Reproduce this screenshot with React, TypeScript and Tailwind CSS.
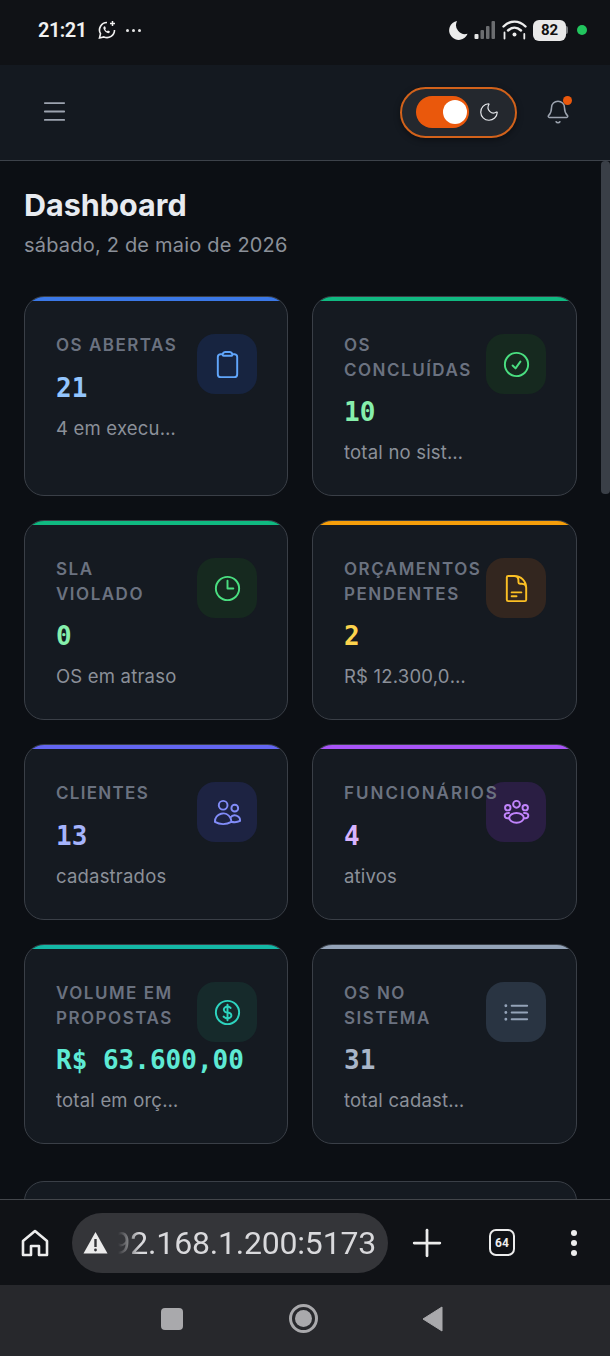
import React from "react";
import {
  HiOutlineClipboard,
  HiOutlineCheckCircle,
  HiOutlineClock,
  HiOutlineDocumentText,
  HiOutlineUsers,
  HiOutlineCurrencyDollar,
  HiOutlineListBullet,
} from "react-icons/hi2";
import { Moon, Bell, Plus, Menu } from "lucide-react";

function GroupIcon({ size }: { size: number }) {
  return (
    <svg width={size} height={size} viewBox="0 0 32 32" fill="none" stroke="currentColor" strokeWidth="2">
      <circle cx="16" cy="7.500" r="3.500" />
      <circle cx="7" cy="11" r="2.800" />
      <circle cx="25" cy="11" r="2.800" />
      <ellipse cx="16" cy="21.500" rx="7.500" ry="5" />
      <path d="M8.500 22H6.500a2.700 2.700 0 0 1-1.200-5.100C6 16.500 7 16.300 9 16.500" />
      <path d="M23.500 22h2a2.700 2.700 0 0 0 1.200-5.100c-.7-.4-1.700-.6-3.700-.4" />
    </svg>
  );
}

const cards = [
  { label: "OS ABERTAS", value: "21", sub: "4 em execução", bar: "bg-[#3b78e7]", val: "text-[#93c5fd]", box: "bg-[#172440]", ic: "text-[#60a5fa]", Icon: HiOutlineClipboard, h: "h-[200px]", lt: "tracking-[1.5px]" },
  { label: "OS CONCLUÍDAS", value: "10", sub: "total no sistema", bar: "bg-[#10b981]", val: "text-[#86efac]", box: "bg-[#16291f]", ic: "text-[#4ade80]", Icon: HiOutlineCheckCircle, h: "h-[200px]", lt: "tracking-[1.5px]" },
  { label: "SLA VIOLADO", value: "0", sub: "OS em atraso", bar: "bg-[#10b981]", val: "text-[#86efac]", box: "bg-[#16291f]", ic: "text-[#4ade80]", Icon: HiOutlineClock, h: "h-[200px]", lt: "tracking-[1.5px]" },
  { label: "ORÇAMENTOS PENDENTES", value: "2", sub: "R$ 12.300,00 total", bar: "bg-[#f59e0b]", val: "text-[#fcd34d]", box: "bg-[#33261f]", ic: "text-[#fbbf24]", Icon: HiOutlineDocumentText, h: "h-[200px]", lt: "tracking-[1.5px]" },
  { label: "CLIENTES", value: "13", sub: "cadastrados", bar: "bg-[#6366f1]", val: "text-[#a5b4fc]", box: "bg-[#1d2342]", ic: "text-[#818cf8]", Icon: HiOutlineUsers, h: "h-[176px]", lt: "tracking-[1.3px]" },
  { label: "FUNCIONÁRIOS", value: "4", sub: "ativos", bar: "bg-[#a855f7]", val: "text-[#d8b4fe]", box: "bg-[#2a1e43]", ic: "text-[#c084fc]", Icon: GroupIcon, h: "h-[176px]", lt: "tracking-[2px]" },
  { label: "VOLUME EM PROPOSTAS", value: "R$ 63.600,00", sub: "total em orçamentos", bar: "bg-[#14b8a6]", val: "text-[#5eead4]", box: "bg-[#162a2b]", ic: "text-[#2dd4bf]", Icon: HiOutlineCurrencyDollar, h: "h-[200px]", lt: "tracking-[1.5px]" },
  { label: "OS NO SISTEMA", value: "31", sub: "total cadastradas", bar: "bg-[#94a3b8]", val: "text-[#a8b5c8]", box: "bg-[#293442]", ic: "text-[#94a3b8]", Icon: HiOutlineListBullet, h: "h-[200px]", lt: "tracking-[1.5px]" },
];

function Card({ c }: { c: (typeof cards)[number] }) {
  const Icon = c.Icon;
  return (
    <div className={`${c.h} rounded-[20px] border border-[#3a3f47] bg-[#151a21] overflow-hidden`}>
      <div className={`h-[5px] -mt-px ${c.bar}`} />
      <div className="flex pl-[31px] pr-[30px] pt-[33px]">
        <div className="relative z-10 flex-1 min-w-0 mr-4">
          <div className={`text-[17px] leading-[24.5px] -mt-[1px] font-semibold text-[#6b7280] ${c.lt}`}>{c.label}</div>
          <div className={`mt-[12px] text-[26px] leading-[36px] font-bold whitespace-nowrap font-['DejaVu_Sans_Mono',monospace] ${c.val}`}>{c.value}</div>
          <div className="mt-[10px] text-[18.5px] leading-[24px] tracking-[0.2px] text-[#8b9099] truncate">{c.sub}</div>
        </div>
        <div className={`w-[60px] h-[60px] rounded-[18px] flex items-center justify-center shrink-0 ${c.box} ${c.ic}`}>
          <Icon size={31} />
        </div>
      </div>
    </div>
  );
}

function StatusBar() {
  return (
    <div className="h-[65px] shrink-0 bg-[#101216] flex items-start justify-between pl-[38px] pr-[23px] pt-[17px] text-[#f1f1f1]">
      <div className="flex items-center gap-[10px] h-[26px]">
        <span className="text-[20px] font-semibold tracking-[-0.5px] font-['Roboto',sans-serif]">21:21</span>
        <svg width="20" height="20" viewBox="0 0 20 20" fill="none" stroke="currentColor" strokeWidth="1.6">
          <path d="M10 2.5a7.5 7.5 0 0 0-6.5 11.2L2.5 18l4.4-1.1A7.5 7.5 0 0 0 17.5 10" />
          <path d="M7 6.5c-1 .8-.8 2.6.8 4.4s3.500 2.800 4.600 1.900l.6-1.300-2-1-.9.700c-.8-.3-1.600-1.200-1.900-2l.7-.9-.900-2z" fill="currentColor" stroke="none" />
          <path d="M15.500 1v5M13 3.500h5" strokeWidth="1.500" />
        </svg>
        <span className="flex gap-[3px] -ml-[1px]">
          <i className="w-[3px] h-[3px] rounded-full bg-[#e5e5e5]" />
          <i className="w-[3px] h-[3px] rounded-full bg-[#e5e5e5]" />
          <i className="w-[3px] h-[3px] rounded-full bg-[#e5e5e5]" />
        </span>
      </div>
      <div className="flex items-center h-[26px]">
        <svg width="21" height="22" viewBox="0 0 22 22" fill="#ececec"><path d="M9.500 1.500A10 10 0 1 0 20.500 15 A9.500 9.500 0 0 1 9.500 1.500z" /></svg>
        <svg width="23" height="20" viewBox="0 0 22 20" className="ml-[4px]">
          <rect x="1" y="14" width="4" height="5" rx="1" fill="#e5e5e5" />
          <rect x="7" y="10" width="3.500" height="9" rx="1" fill="#6b6d70" />
          <rect x="12.500" y="6" width="3.500" height="13" rx="1" fill="#6b6d70" />
          <rect x="18" y="1" width="3.500" height="18" rx="1" fill="#6b6d70" />
        </svg>
        <svg width="25" height="22" viewBox="0 0 25 22" fill="none" stroke="#ececec" strokeWidth="2.400" strokeLinecap="round" className="ml-[6px]">
          <path d="M1.500 7.500C8 1 17 1 23.500 7.500" />
          <path d="M6 11.500c4-3.600 9-3.600 13 0" />
          <circle cx="12.500" cy="15.500" r="2" fill="#ececec" stroke="none" />
          <path d="M2.500 13.500v6M22.300 15v4.500" strokeWidth="1.800" />
        </svg>
        <div className="ml-[6px] w-[33px] h-[21px] bg-[#e8e8e8] rounded-[6px] flex items-center justify-center">
          <span className="text-[#111] text-[15px] leading-none font-bold font-['Roboto',sans-serif]">82</span>
        </div>
        <div className="w-[2px] h-[8px] bg-[#77797c] rounded-r-sm" />
        <div className="ml-[9px] w-[10px] h-[10px] rounded-full bg-[#22c55e]" />
      </div>
    </div>
  );
}

function Header() {
  return (
    <div className="h-[96px] shrink-0 bg-[#141920] border-b border-[#3d424a] flex items-center justify-between pl-[40px] pr-[39px] pb-[1px]">
      <Menu size={29} strokeWidth={1.5} className="text-[#9ca3af] -mt-[1px]" />
      <div className="flex items-center">
        <div className="w-[117px] h-[51px] rounded-full border-2 border-[#d2621b] bg-[#24282e] flex items-center pl-[14px] gap-[9px] shadow-[0_2px_6px_rgba(0,0,0,0.4)]">
          <div className="w-[53px] h-[32px] rounded-full bg-[#ea580c] flex items-center justify-end pr-[2px]">
            <div className="w-[24px] h-[24px] rounded-full bg-white" />
          </div>
          <Moon size={22} strokeWidth={1.3} className="text-[#e5e7eb]" />
        </div>
        <div className="relative ml-[28px]">
          <Bell size={26} strokeWidth={1.4} className="text-[#9ca3af]" />
          <span className="absolute -top-[3px] right-[-1px] w-[9px] h-[9px] rounded-full bg-[#ea580c]" />
        </div>
      </div>
    </div>
  );
}

function Bottom() {
  return (
    <>
      <div className="h-[86px] shrink-0 bg-[#101216] border-t border-[#43464b] flex items-center pl-[20px] pr-[33px] text-[#ececec]">
        <svg width="30" height="30" viewBox="0 0 30 30" fill="none" stroke="currentColor" strokeWidth="2.600" strokeLinejoin="round" className="shrink-0">
          <path d="M3 13L15 3l12 10v14h-8v-9h-8v9H3z" />
        </svg>
        <div className="ml-[22px] w-[316px] h-[60px] rounded-full bg-[#343539] flex items-center pl-[11px] overflow-hidden">
          <svg width="25" height="23" viewBox="0 0 25 23" className="shrink-0">
            <path d="M12.500 1L24.500 22.500H.5z" fill="#ececec" />
            <path d="M12.500 8v8" stroke="#343539" strokeWidth="2.400" />
            <circle cx="12.500" cy="19" r="1.400" fill="#343539" />
          </svg>
          <span className="ml-[10px] w-[258px] overflow-hidden whitespace-nowrap text-[32px] leading-none font-['Roboto',sans-serif] text-[#d9d9dc] tracking-[-0.2px] text-right [direction:rtl] [mask-image:linear-gradient(to_right,transparent,black_22px)]">
            <bdi>192.168.1.200:5173</bdi>
          </span>
        </div>
        <Plus size={44} strokeWidth={1.5} className="ml-[17px] shrink-0" />
        <div className="ml-[40px] w-[26px] h-[27px] rounded-[7px] border-[2.5px] border-[#ececec] flex items-center justify-center text-[12px] font-bold font-['Roboto',sans-serif]">64</div>
        <div className="ml-auto flex flex-col gap-[4px]">
          <i className="w-[6px] h-[6px] rounded-full bg-[#ececec]" />
          <i className="w-[6px] h-[6px] rounded-full bg-[#ececec]" />
          <i className="w-[6px] h-[6px] rounded-full bg-[#ececec]" />
        </div>
      </div>
      <div className="h-[71px] shrink-0 bg-[#27282c] flex items-center pl-[161px] pb-[4px]">
        <div className="w-[22px] h-[22px] rounded-[4px] bg-[#a9a9ac]" />
        <div className="ml-[106px] w-[29px] h-[29px] rounded-full border-[3px] border-[#a9a9ac] flex items-center justify-center">
          <div className="w-[17px] h-[17px] rounded-full bg-[#a9a9ac]" />
        </div>
        <svg width="21" height="26" viewBox="0 0 21 26" className="ml-[104px]"><path d="M20 1v24L1 13z" fill="#a9a9ac" stroke="#a9a9ac" strokeLinejoin="round" /></svg>
      </div>
    </>
  );
}

export default function App() {
  return (
    <div className="w-[610px] h-[1356px] flex flex-col overflow-hidden bg-[#0c0f14] font-['Inter','Liberation_Sans',sans-serif]">
      <StatusBar />
      <Header />
      <div className="relative flex-1 min-h-0 overflow-hidden">
        <div className="pl-6 pt-6">
          <h1 className="text-[30.5px] leading-[40px] font-bold text-[#e8ebf0]">Dashboard</h1>
          <p className="mt-[6px] text-[20px] leading-[28px] tracking-[0.2px] text-[#8b9099]">sábado, 2 de maio de 2026</p>
          <div className="mt-[37px] grid grid-cols-[264px_265px] gap-6">
            {cards.map((c) => (
              <Card key={c.label} c={c} />
            ))}
            <div className="col-span-2 h-[200px] rounded-[20px] border border-[#3a3f47] bg-[#151a21] mt-[13px]" />
          </div>
        </div>
        <div className="absolute right-0 top-0 w-[9px] h-[333px] rounded-[4px] bg-[#3a3f47]" />
      </div>
      <Bottom />
    </div>
  );
}
